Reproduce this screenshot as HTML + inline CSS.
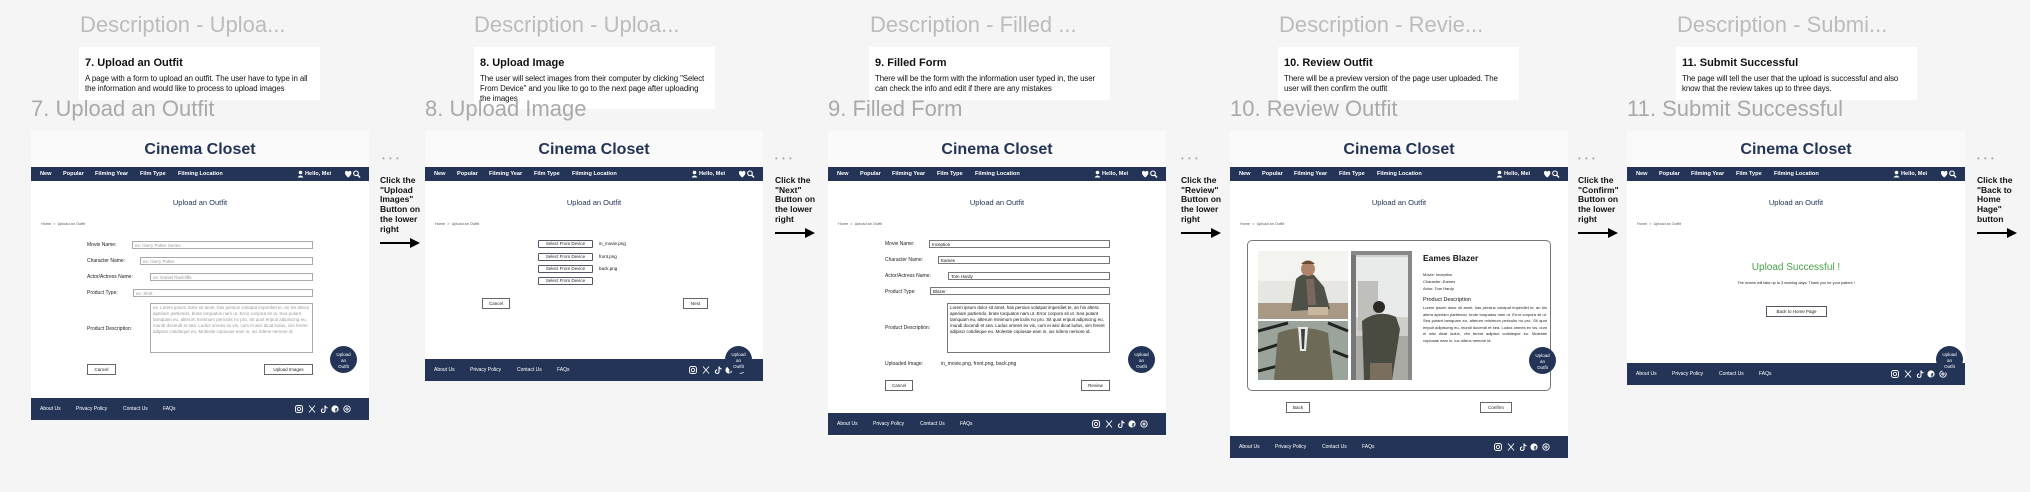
<!DOCTYPE html>
<html><head><meta charset="utf-8"><style>
*{margin:0;padding:0;box-sizing:border-box}
body{width:2030px;height:492px;background:#f5f5f5;position:relative;overflow:hidden;font-family:"Liberation Sans",sans-serif}
.a{position:absolute}
.dh{position:absolute;top:12px;font-size:22px;color:#bcbcbc;white-space:nowrap}
.card{position:absolute;top:47px;width:241px;height:53px;background:#fff;padding:10px 6px 0 6px}
.card b{display:block;font-size:11px;color:#111;margin-bottom:5px}
.card p{font-size:7.9px;line-height:9.8px;color:#111;letter-spacing:-0.1px}
.ft{position:absolute;top:96px;font-size:22px;color:#a9a9a9;white-space:nowrap}
.f{position:absolute;top:131px;width:338px;background:#fff;overflow:visible}
.hd{position:absolute;top:0;left:0;width:338px;height:36px;background:#fafafa;text-align:center;font-size:16px;font-weight:bold;color:#233457;line-height:38px}
.nav{position:absolute;top:36px;left:0;width:338px;height:14px;background:#233457;color:#fff;font-size:5.6px;font-weight:bold}
.nav span,.fo span{position:absolute;top:4px;white-space:nowrap}
.h2{position:absolute;top:67px;width:338px;text-align:center;font-size:7.5px;color:#233457}
.bc{position:absolute;top:91px;left:10px;font-size:3.8px;color:#556}
.fo{position:absolute;left:0;width:338px;height:22px;background:#233457;color:#fff;font-size:5px}
.fo span{top:8px}
.ic{position:absolute;top:7px}
.lb{position:absolute;font-size:5px;color:#222;white-space:nowrap}
.in{position:absolute;height:8px;border:1px solid #aaa;font-size:4.5px;color:#999;padding:1px 2px;white-space:nowrap;overflow:hidden}
.in.v{color:#111;border-color:#777}
.ta{position:absolute;border:1px solid #aaa;font-size:4.5px;line-height:5.9px;color:#999;padding:1px 2px;overflow:hidden}
.bt{position:absolute;height:11px;border:1px solid #666;font-size:4.5px;color:#222;text-align:center;line-height:9px;background:#fff}
.up{position:absolute;width:27px;height:27px;border-radius:50%;background:#233457;color:#fff;font-size:4.5px;text-align:center;line-height:6px;padding-top:6px;z-index:3}
.cl{position:absolute;font-size:8.5px;font-weight:bold;line-height:9.7px;color:#111}
.dot{position:absolute;top:154px;font-size:8px;color:#aaa;letter-spacing:1px}
.ar{position:absolute;width:40px;height:10px}
.sel{position:absolute;left:113px;width:55px;height:8px;border:1px solid #556;border-radius:1px;font-size:4.5px;color:#223;text-align:center;line-height:6px}
.fn{position:absolute;left:174px;font-size:4.5px;color:#111}
</style></head><body>

<div class="dh" style="left:80px">Description - Uploa...</div>
<div class="card" style="left:79px"><b>7. Upload an Outfit</b><p>A page with a form to upload an outfit. The user have to type in all the information and would like to process to upload images</p></div>
<div class="dh" style="left:474px">Description - Uploa...</div>
<div class="card" style="left:474px;height:62px"><b>8. Upload Image</b><p>The user will select images from their computer by clicking "Select From Device" and you like to go to the next page after uploading the images</p></div>
<div class="dh" style="left:870px">Description - Filled ...</div>
<div class="card" style="left:869px"><b>9. Filled Form</b><p>There will be the form with the information user typed in, the user can check the info and edit if there are any mistakes</p></div>
<div class="dh" style="left:1279px">Description - Revie...</div>
<div class="card" style="left:1278px"><b>10. Review Outfit</b><p>There will be a preview version of the page user uploaded. The user will then confirm the outfit</p></div>
<div class="dh" style="left:1677px">Description - Submi...</div>
<div class="card" style="left:1676px"><b>11. Submit Successful</b><p>The page will tell the user that the upload is successful and also know that the review takes up to three days.</p></div>

<div class="ft" style="left:31px">7. Upload an Outfit</div>
<div class="ft" style="left:425px">8. Upload Image</div>
<div class="ft" style="left:828px">9. Filled Form</div>
<div class="ft" style="left:1230px">10. Review Outfit</div>
<div class="ft" style="left:1627px">11. Submit Successful</div>

<svg width="0" height="0" style="position:absolute"><defs><g id="arr"><rect x="0" y="4" width="31" height="2" fill="#000"/><polygon points="30,0 40,5 30,10" fill="#000"/></g><g id="soc" fill="none" stroke="#fff" stroke-width="0.9"><rect x="0.5" y="0.5" width="7" height="7" rx="2"/><circle cx="4" cy="4" r="1.7"/><path d="M14,0.5 L20,7.5 M20,0.5 L14,7.5"/><path d="M30,0.5 v5.2 a1.8,1.8 0 1 1 -1.8,-1.8 M30,0.5 c0.3,1.5 1.3,2.3 2.5,2.4" stroke-width="1.1"/><circle cx="40" cy="4" r="3.6" fill="#fff" stroke="none"/><path d="M41,8 v-4.5 h1.2 M39.8,5 h2.6" stroke="#233457"/><circle cx="52" cy="4" r="3.2"/><circle cx="52" cy="4" r="1.1"/></g>
<g id="nr"><circle cx="3.5" cy="2.5" r="1.8" fill="#fff"/><path d="M0.5,7.5 q3,-4 6,0 z" fill="#fff"/><path d="M48,3 q0,-2.5 2.2,-2 q0.8,0.2 1,1 q0.2,-0.8 1,-1 q2.2,-0.5 2.2,2 q0,2 -3.2,4.5 q-3.2,-2.5 -3.2,-4.5z" fill="#fff"/><circle cx="59" cy="3.3" r="2.3" fill="none" stroke="#fff" stroke-width="1.1"/><path d="M60.7,5 L63,7.5" stroke="#fff" stroke-width="1.4"/></g></defs></svg>

<div class="dot" style="left:382px">• • •</div>
<div class="cl" style="left:380px;top:176px">Click the<br>"Upload<br>Images"<br>Button on<br>the lower<br>right</div>
<svg class="ar" style="left:380px;top:238px"><use href="#arr"/></svg>
<div class="dot" style="left:775px">• • •</div>
<div class="cl" style="left:775px;top:176px">Click the<br>"Next"<br>Button on<br>the lower<br>right</div>
<svg class="ar" style="left:775px;top:228px"><use href="#arr"/></svg>
<div class="dot" style="left:1181px">• • •</div>
<div class="cl" style="left:1181px;top:176px">Click the<br>"Review"<br>Button on<br>the lower<br>right</div>
<svg class="ar" style="left:1181px;top:228px"><use href="#arr"/></svg>
<div class="dot" style="left:1578px">• • •</div>
<div class="cl" style="left:1578px;top:176px">Click the<br>"Confirm"<br>Button on<br>the lower<br>right</div>
<svg class="ar" style="left:1578px;top:228px"><use href="#arr"/></svg>
<div class="dot" style="left:1977px">• • •</div>
<div class="cl" style="left:1977px;top:176px">Click the<br>"Back to<br>Home<br>Hage"<br>button</div>
<svg class="ar" style="left:1977px;top:228px"><use href="#arr"/></svg>

<!-- FRAME 1 -->
<div class="f" style="left:31px;height:289px">
<div class="hd">Cinema Closet</div>
<div class="nav"><span style="left:9px">New</span><span style="left:32px">Popular</span><span style="left:64px">Filming Year</span><span style="left:109px">Film Type</span><span style="left:147px">Filming Location</span>
<svg class="a" style="left:266px;top:3px" width="70" height="9"><use href="#nr"/></svg>
<span style="left:274px">Hello, Mei</span></div>
<div class="h2">Upload an Outfit</div>
<div class="bc">Home &nbsp;&gt;&nbsp; Upload an Outfit</div>
<div class="lb" style="left:56px;top:111px">Movie Name:</div><div class="in" style="left:101px;top:110px;width:181px">ex: Harry Potter Series</div>
<div class="lb" style="left:56px;top:127px">Character Name:</div><div class="in" style="left:109px;top:126px;width:173px">ex: Harry Potter</div>
<div class="lb" style="left:56px;top:143px">Actor/Actress Name:</div><div class="in" style="left:119px;top:142px;width:163px">ex: Daniel Radcliffe</div>
<div class="lb" style="left:56px;top:159px">Product Type:</div><div class="in" style="left:102px;top:158px;width:180px">ex: Shirt</div>
<div class="lb" style="left:56px;top:195px">Product Description:</div><div class="ta" style="left:119px;top:172px;width:163px;height:50px">ex: Lorem ipsum dolor sit amet, has persius volutpat imperdiet te, an his altera aperiam partiendo, brute torquatos nam ut. Error corpora sit ut. Sea putant tamquam eu, alterum minimum periculis no pro. Sit quot eripuit adipiscing eu, mundi docendi et sea. Ludus omnes ex vis, cum ei wisi dicat ludus, vim ferent adipisci cotidieque eu. Molestie copiosae eam in, ius ridens nemore id.</div>
<div class="bt" style="left:56px;top:233px;width:29px">Cancel</div>
<div class="bt" style="left:233px;top:233px;width:49px">Upload Images</div>
<div class="up" style="left:299px;top:215px">Upload<br>an<br>Outfit</div>
<div class="fo" style="top:267px"><span style="left:9px">About Us</span><span style="left:45px">Privacy Policy</span><span style="left:92px">Contact Us</span><span style="left:132px">FAQs</span><svg class="ic" style="left:264px" width="60" height="9"><use href="#soc"/></svg></div>
</div>

<!-- FRAME 2 -->
<div class="f" style="left:425px;height:250px">
<div class="hd">Cinema Closet</div>
<div class="nav"><span style="left:9px">New</span><span style="left:32px">Popular</span><span style="left:64px">Filming Year</span><span style="left:109px">Film Type</span><span style="left:147px">Filming Location</span>
<svg class="a" style="left:266px;top:3px" width="70" height="9"><use href="#nr"/></svg>
<span style="left:274px">Hello, Mei</span></div>
<div class="h2">Upload an Outfit</div>
<div class="bc">Home &nbsp;&gt;&nbsp; Upload an Outfit</div>
<div class="sel" style="top:109px">Select From Device</div><div class="fn" style="top:110px">in_movie.png</div>
<div class="sel" style="top:122px">Select From Device</div><div class="fn" style="top:123px">front.png</div>
<div class="sel" style="top:134px">Select From Device</div><div class="fn" style="top:135px">back.png</div>
<div class="sel" style="top:146px">Select From Device</div>
<div class="bt" style="left:57px;top:167px;width:28px">Cancel</div>
<div class="bt" style="left:258px;top:167px;width:25px">Next</div>
<div class="up" style="left:300px;top:215px">Upload<br>an<br>Outfit</div>
<div class="fo" style="top:228px"><span style="left:9px">About Us</span><span style="left:45px">Privacy Policy</span><span style="left:92px">Contact Us</span><span style="left:132px">FAQs</span><svg class="ic" style="left:264px" width="60" height="9"><use href="#soc"/></svg></div>
</div>

<!-- FRAME 3 -->
<div class="f" style="left:828px;height:305px">
<div class="hd">Cinema Closet</div>
<div class="nav"><span style="left:9px">New</span><span style="left:32px">Popular</span><span style="left:64px">Filming Year</span><span style="left:109px">Film Type</span><span style="left:147px">Filming Location</span>
<svg class="a" style="left:266px;top:3px" width="70" height="9"><use href="#nr"/></svg>
<span style="left:274px">Hello, Mei</span></div>
<div class="h2">Upload an Outfit</div>
<div class="bc">Home &nbsp;&gt;&nbsp; Upload an Outfit</div>
<div class="lb" style="left:57px;top:110px">Movie Name:</div><div class="in v" style="left:101px;top:109px;width:181px">Inception</div>
<div class="lb" style="left:57px;top:126px">Character Name:</div><div class="in v" style="left:110px;top:125px;width:172px">Eames</div>
<div class="lb" style="left:57px;top:142px">Actor/Actress Name:</div><div class="in v" style="left:120px;top:141px;width:162px">Tom Hardy</div>
<div class="lb" style="left:57px;top:158px">Product Type:</div><div class="in v" style="left:102px;top:156px;width:180px">Blazer</div>
<div class="lb" style="left:57px;top:194px">Product Description:</div><div class="ta" style="left:119px;top:172px;width:163px;height:50px;color:#111;border-color:#777">Lorem ipsum dolor sit amet, has persius volutpat imperdiet te, an his altera aperiam partiendo, brute torquatos nam ut. Error corpora sit ut. Sea putant tamquam eu, alterum minimum periculis no pro. Sit quot eripuit adipiscing eu, mundi docendi et sea. Ludus omnes ex vis, cum ei wisi dicat ludus, vim ferent adipisci cotidieque eu. Molestie copiosae eam in, ius ridens nemore id.</div>
<div class="lb" style="left:57px;top:230px">Uploaded Image:</div><div class="lb" style="left:113px;top:230px">in_movie.png, front.png, back.png</div>
<div class="bt" style="left:57px;top:249px;width:28px">Cancel</div>
<div class="bt" style="left:253px;top:249px;width:29px">Review</div>
<div class="up" style="left:300px;top:215px">Upload<br>an<br>Outfit</div>
<div class="fo" style="top:282px"><span style="left:9px">About Us</span><span style="left:45px">Privacy Policy</span><span style="left:92px">Contact Us</span><span style="left:132px">FAQs</span><svg class="ic" style="left:264px" width="60" height="9"><use href="#soc"/></svg></div>
</div>

<!-- FRAME 4 -->
<div class="f" style="left:1230px;height:327px">
<div class="hd">Cinema Closet</div>
<div class="nav"><span style="left:9px">New</span><span style="left:32px">Popular</span><span style="left:64px">Filming Year</span><span style="left:109px">Film Type</span><span style="left:147px">Filming Location</span>
<svg class="a" style="left:266px;top:3px" width="70" height="9"><use href="#nr"/></svg>
<span style="left:274px">Hello, Mei</span></div>
<div class="h2">Upload an Outfit</div>
<div class="bc">Home &nbsp;&gt;&nbsp; Upload an Outfit</div>
<div class="a" style="left:17px;top:109px;width:304px;height:151px;border:1px solid #777;border-radius:5px"></div>
<svg class="a" style="left:28px;top:120px" width="155" height="130">
<rect x="0" y="0" width="90" height="68" fill="#e6e6e2"/><rect x="0" y="0" width="90" height="30" fill="#f3f3f0"/><rect x="0" y="52" width="90" height="16" fill="#a89884"/>
<path d="M33,60 L38,28 Q46,20 56,24 L66,36 L72,58 Z" fill="#4e5148"/><circle cx="50" cy="18" r="7" fill="#b0846a"/><path d="M43,13 q7,-7 14,0" fill="#6b4a30"/><path d="M48,28 L56,28 L58,54 L50,54Z" fill="#7b6660"/><rect x="50" y="56" width="20" height="8" fill="#c8b6a0"/>
<rect x="0" y="70" width="90" height="59" fill="#9ba49a"/><path d="M0,80 L30,72 M0,100 L25,92 M70,72 L90,80 M75,100 L90,106 M0,120 L20,115" stroke="#222" stroke-width="3"/><path d="M16,129 L20,82 Q45,72 70,82 L75,129Z" fill="#6d6a58"/><path d="M40,76 L50,76 L48,100 L42,100Z" fill="#e8e8e8"/><path d="M43,78 L47,78 L46,98 L44,98Z" fill="#3d3f3a"/>
<rect x="93" y="0" width="61" height="129" fill="#cfd0cc"/><rect x="98" y="6" width="52" height="60" fill="#e9eaea"/><rect x="100" y="30" width="20" height="50" fill="#bfc0bb"/><rect x="93" y="0" width="5" height="129" fill="#777"/><rect x="150" y="0" width="4" height="129" fill="#888"/><rect x="93" y="0" width="61" height="4" fill="#888"/><rect x="98" y="85" width="52" height="44" fill="#a9aaa3"/>
<path d="M106,129 L104,70 Q120,58 138,66 L142,78 L134,129Z" fill="#4a4b40"/><circle cx="121" cy="56" r="6" fill="#2d2a26"/><rect x="112" y="112" width="22" height="17" fill="#7a6e5d"/>
</svg>
<div class="a" style="left:193px;top:122px;font-size:8.5px;font-weight:bold;color:#111">Eames Blazer</div>
<div class="a" style="left:193px;top:140px;font-size:4px;line-height:7px;color:#222">Movie: Inception<br>Character: Eames<br>Actor: Tom Hardy</div>
<div class="a" style="left:193px;top:166px;font-size:5.5px;color:#111">Product Description</div>
<div class="a" style="left:193px;top:174px;width:124px;font-size:4px;line-height:6.6px;color:#222;text-align:justify">Lorem ipsum dolor sit amet, has persius volutpat imperdiet te, an his altera aperiam partiendo, brute torquatos nam ut. Error corpora sit ut. Sea putant tamquam eu, alterum minimum periculis no pro. Sit quot eripuit adipiscing eu, mundi docendi et sea. Ludus omnes ex vis, cum ei wisi dicat ludus, vim ferent adipisci cotidieque eu. Molestie copiosae eam in, ius ridens nemore id.</div>
<div class="bt" style="left:56px;top:271px;width:24px">Back</div>
<div class="bt" style="left:250px;top:271px;width:32px">Confirm</div>
<div class="up" style="left:299px;top:216px">Upload<br>an<br>Outfit</div>
<div class="fo" style="top:305px"><span style="left:9px">About Us</span><span style="left:45px">Privacy Policy</span><span style="left:92px">Contact Us</span><span style="left:132px">FAQs</span><svg class="ic" style="left:264px" width="60" height="9"><use href="#soc"/></svg></div>
</div>

<!-- FRAME 5 -->
<div class="f" style="left:1627px;height:254px">
<div class="hd">Cinema Closet</div>
<div class="nav"><span style="left:9px">New</span><span style="left:32px">Popular</span><span style="left:64px">Filming Year</span><span style="left:109px">Film Type</span><span style="left:147px">Filming Location</span>
<svg class="a" style="left:266px;top:3px" width="70" height="9"><use href="#nr"/></svg>
<span style="left:274px">Hello, Mei</span></div>
<div class="h2">Upload an Outfit</div>
<div class="bc">Home &nbsp;&gt;&nbsp; Upload an Outfit</div>
<div class="a" style="left:0;top:131px;width:338px;text-align:center;font-size:10px;color:#4aa34a">Upload Successful !</div>
<div class="a" style="left:0;top:150px;width:338px;text-align:center;font-size:3.8px;color:#222">The review will take up to 3 working days. Thank you for your patient !</div>
<div class="bt" style="left:139px;top:175px;width:61px;border-color:#556">Back to Home Page</div>
<div class="up" style="left:309px;top:215px">Upload<br>an<br>Outfit</div>
<div class="fo" style="top:232px"><span style="left:9px">About Us</span><span style="left:45px">Privacy Policy</span><span style="left:92px">Contact Us</span><span style="left:132px">FAQs</span><svg class="ic" style="left:264px" width="60" height="9"><use href="#soc"/></svg></div>
</div>

</body></html>
